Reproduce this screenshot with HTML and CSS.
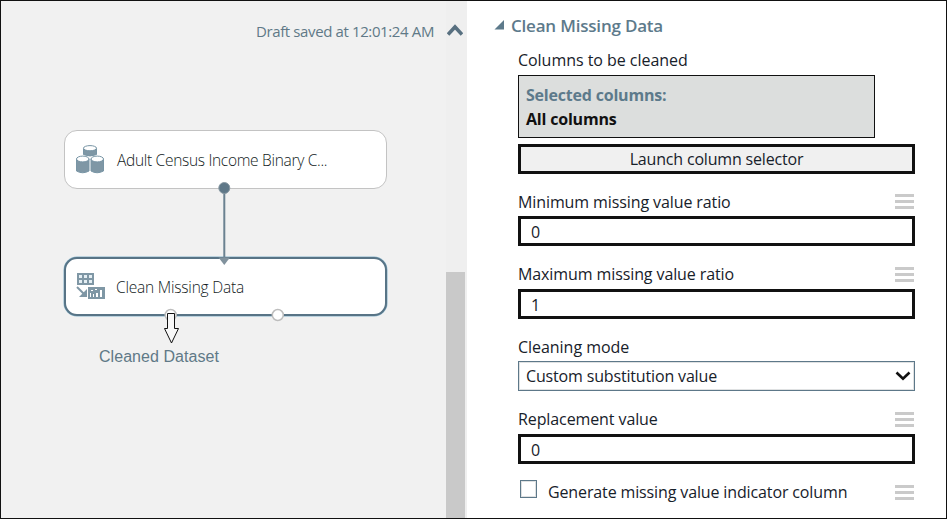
FILE: index.html
```html
<!DOCTYPE html>
<html lang="en">
<head>
<meta charset="utf-8">
<title>Clean Missing Data</title>
<link rel="stylesheet" href="styles.css">
</head>
<body>
<div class="app">
  <main class="canvas">
    <div class="status">Draft saved at 12:01:24 AM</div>

    <div class="node node-source">
      <svg class="node-icon" width="28" height="29" viewBox="0 0 28 29">
        <g fill="#7f97a5" stroke="#7895a5" stroke-width="1">
          <path d="M7.500 3v6.500q6.500 3 13 0V3z"/>
          <path d="M.500 14v12q6 3.500 12.500 0V14z"/>
          <path d="M15 14v12q6 3.500 12.500 0V14z"/>
          <ellipse cx="14" cy="3.200" rx="6.500" ry="2.600" fill="#fff"/>
          <ellipse cx="6.750" cy="14" rx="6.250" ry="2.900" fill="#fff"/>
          <ellipse cx="21.250" cy="14" rx="6.250" ry="2.900" fill="#fff"/>
        </g>
      </svg>
      <span class="name name-source">Adult Census Income Binary C...</span>
    </div>

    <div class="node node-clean">
      <svg class="node-icon" width="29" height="27" viewBox="0 0 29 27">
        <path fill="#7f97a5" d="M1 0h17v12H1z"/>
        <path fill="#e4eef3" d="M3 2h3v3H3zm5 0h3v3H8zm5 0h3v3h-3zM3 7h3v3H3zm5 0h3v3H8zm5 0h3v3h-3z"/>
        <path fill="none" stroke="#7f97a5" stroke-width="2" d="M1 14l8 8"/>
        <path fill="#7f97a5" d="M11 16v8H3z"/>
        <path fill="#7f97a5" d="M12 14h17v12H12z"/>
        <path fill="#fff" d="M15 17h2v1h-2zm4 -1h2v1h-2zm5 1h2v7h-2zM14 20h1v4h-1zm3 1h1v3h-1zm3-1h2v4h-2z"/>
      </svg>
      <span class="name name-clean">Clean Missing Data</span>
    </div>

    <svg class="wires" width="445" height="517" viewBox="1 1 445 517">
      <path d="M224.300 188V258" stroke="#6b8291" stroke-width="2" fill="none"/>
      <circle cx="224.300" cy="188" r="5.500" fill="#5f7888" stroke="#8999a3"/>
      <path d="M218.500 257.500h11.500l-5.700 7.500z" fill="#81929d"/>
      <circle cx="170.700" cy="315" r="5.500" fill="#fff" stroke="#bdbdbd" stroke-width="1.500"/>
      <circle cx="277.800" cy="315" r="5.500" fill="#fff" stroke="#bdbdbd" stroke-width="1.500"/>
      <path d="M167.500 313.500h7v15h4l-7 14.500-7-14.500h3z" fill="#f8f8f8" stroke="#111"/>
    </svg>
    <div class="output-label">Cleaned Dataset</div>
  </main>

  <div class="scrollbar">
    <svg class="scroll-up" width="16" height="12" viewBox="0 0 16 12"><path d="M1 10.500L8 3l7 7.500" fill="none" stroke="#587080" stroke-width="3.600"/></svg>
    <div class="thumb"></div>
  </div>

  <aside class="panel">
    <h1 class="heading">
      <svg width="10" height="10" viewBox="0 0 10 10"><path d="M10 0v9.500H.5z" fill="#5d7a8b"/></svg>
      <span>Clean Missing Data</span>
    </h1>
    <div class="fields">
      <div class="row first"><span class="t-short">Columns to be cleaned</span></div>
      <div class="selection">
        <span class="selection-title">Selected columns:</span>
        <span class="selection-value">All columns</span>
      </div>
      <button class="launch">Launch column selector</button>

      <div class="row"><span>Minimum missing value ratio</span><i class="menu"></i></div>
      <div class="input">0</div>

      <div class="row tall"><span>Maximum missing value ratio</span><i class="menu"></i></div>
      <div class="input">1</div>

      <div class="row"><span class="t-short">Cleaning mode</span></div>
      <div class="select"><span>Custom substitution value</span>
        <svg width="16" height="12" viewBox="0 0 16 12"><path d="M1.500 2.500L8 8.800l6.500-6.300" fill="none" stroke="#111" stroke-width="2.600"/></svg>
      </div>

      <div class="row tall"><span>Replacement value</span><i class="menu"></i></div>
      <div class="input">0</div>

      <div class="check-row">
        <span class="checkbox"></span>
        <span>Generate missing value indicator column</span>
        <i class="menu"></i>
      </div>
    </div>
  </aside>
</div>
</body>
</html>
```

FILE: styles.css
```css
* { box-sizing: border-box; }

body {
  margin: 0;
  font-family: "Open Sans", "Noto Sans", sans-serif;
  font-size: 16px;
  color: #17212a;
}

.app {
  display: flex;
  width: 947px;
  height: 519px;
  border: 1px solid #111;
  background: #fff;
  overflow: hidden;
  white-space: nowrap;
}

.canvas {
  position: relative;
  width: 445px;
  background: #f1f1f1;
}

.status {
  padding: 19px 12px 0 0;
  font-size: 15px;
  line-height: 22px;
  letter-spacing: -0.38px;
  text-align: right;
  color: #607987;
}

.node {
  position: absolute;
  left: 63px;
  width: 323px;
  display: flex;
  align-items: center;
  background: #fff;
  border-radius: 13px;
}

.node-source {
  top: 129px;
  height: 59px;
  padding-left: 11px;
  border: 1.5px solid #c3c3c3;
}

.node-clean {
  top: 256px;
  height: 59px;
  padding-left: 10px;
  border: 2px solid #587486;
  box-shadow: 0 0 0 0.5px #86b4cb;
}

.node-icon { flex: none; }

.name { font-size: 15.5px; font-weight: 330; color: #111a22; }
.name-source { margin-left: 13px; letter-spacing: -0.3px; }
.name-clean { margin-left: 11px; letter-spacing: -0.2px; }

.wires { position: absolute; left: 0; top: 0; }

.output-label {
  position: absolute;
  left: 98px;
  top: 346px;
  font: 16px/20px "Liberation Sans", sans-serif;
  letter-spacing: 0.05px;
  color: #607987;
}

.scrollbar {
  display: flex;
  flex-direction: column;
  width: 21px;
  padding-right: 2px;
  background: #efefef;
}

.scroll-up { margin: 23px 0 0 1px; }

.thumb { flex: 1; margin-top: 236px; background: #c9c9c9; }

.panel { flex: 1; }

.heading {
  display: flex;
  align-items: center;
  gap: 7px;
  height: 26px;
  margin: 11px 0 0 27px;
  font-size: 17px;
  font-weight: 600;
  letter-spacing: -0.2px;
  color: #5d7a8b;
}

.fields { width: 397px; margin-left: 51px; }

.row {
  display: flex;
  justify-content: space-between;
  align-items: center;
  height: 42px;
  padding-top: 13px;
  letter-spacing: -0.1px;
}
.row.tall { height: 43px; padding-top: 13px; }
.row.first { height: 37px; padding-top: 6px; }
.t-short { letter-spacing: -0.04px; }

.selection {
  display: flex;
  flex-direction: column;
  width: 357px;
  height: 63px;
  padding: 7px;
  border: 1px solid #111;
  background: #dcdedd;
  font-weight: 700;
  line-height: 24px;
  letter-spacing: -0.2px;
}
.selection-title { color: #5d7a8b; }
.selection-value { color: #111; }

.launch {
  display: block;
  width: 397px;
  height: 30px;
  margin-top: 6px;
  padding: 0;
  border: 3px solid #111;
  background: #f0f0f0;
  font: inherit;
  line-height: 24px;
  letter-spacing: -0.18px;
  color: #17212a;
}

.menu {
  width: 19px;
  height: 15px;
  margin-right: 1px;
  border-top: 3px solid #cacaca;
  border-bottom: 3px solid #cacaca;
  background: linear-gradient(#cacaca, #cacaca) 0 3px / 19px 3px no-repeat;
}

.input {
  height: 30px;
  padding-left: 10px;
  border: 3px solid #111;
  line-height: 26px;
}

.select {
  display: flex;
  align-items: center;
  justify-content: space-between;
  height: 30px;
  padding: 0 3px 0 7px;
  border: 1px solid #5d7889;
  box-shadow: inset 0 0 0 1px #dfe1e2;
  letter-spacing: -0.16px;
}

.check-row {
  display: flex;
  align-items: center;
  height: 28px;
  margin-top: 14px;
  letter-spacing: -0.13px;
}
.checkbox {
  width: 17px;
  height: 18px;
  margin: 0 11px 6px 2px;
  border: 1px solid #5d7889;
  box-shadow: inset 0 0 0 1px #dfe1e2;
}
.check-row .menu { margin-left: auto; }
```
